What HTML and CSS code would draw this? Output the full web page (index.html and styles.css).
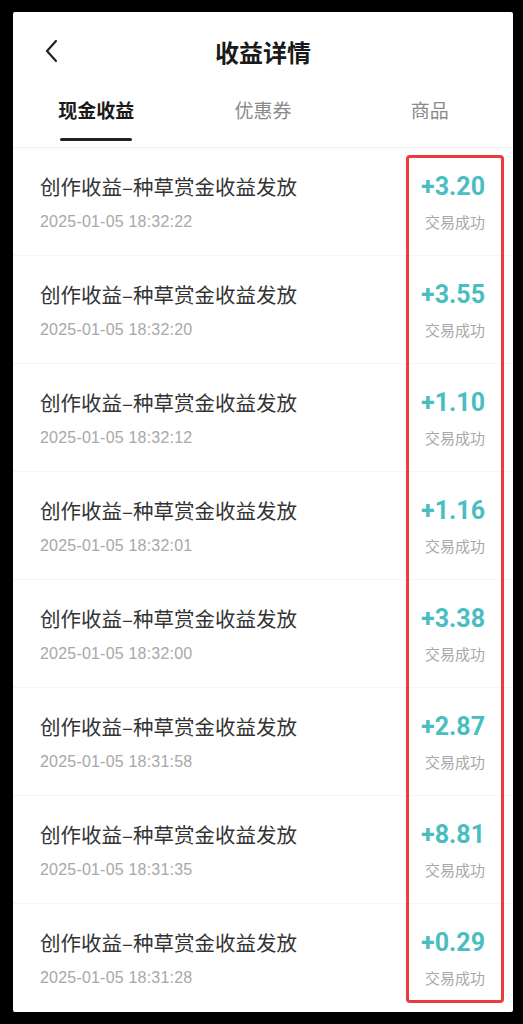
FILE: index.html
```html
<!DOCTYPE html>
<html lang="zh-CN">
<head>
<meta charset="utf-8">
<title>收益详情</title>
<link rel="stylesheet" href="styles.css">
</head>
<body>
<div class="screen">
  <header class="navbar">
    <svg class="back" width="14" height="24" viewBox="0 0 14 24"><path d="M12 2 L3 12 L12 22" fill="none" stroke="#222" stroke-width="2.2" stroke-linecap="round" stroke-linejoin="round"/></svg>
    <h1 class="title">收益详情</h1>
  </header>
  <nav class="tabs">
    <div class="tab active"><span>现金收益</span><i class="bar"></i></div>
    <div class="tab"><span>优惠券</span></div>
    <div class="tab"><span>商品</span></div>
  </nav>
  <ul class="list">
    <li class="row"><div class="info"><div class="name">创作收益–种草赏金收益发放</div><div class="date">2025-01-05 18:32:22</div></div><div class="amt"><div class="num">+3.20</div><div class="status">交易成功</div></div></li>
    <li class="row"><div class="info"><div class="name">创作收益–种草赏金收益发放</div><div class="date">2025-01-05 18:32:20</div></div><div class="amt"><div class="num">+3.55</div><div class="status">交易成功</div></div></li>
    <li class="row"><div class="info"><div class="name">创作收益–种草赏金收益发放</div><div class="date">2025-01-05 18:32:12</div></div><div class="amt"><div class="num">+1.10</div><div class="status">交易成功</div></div></li>
    <li class="row"><div class="info"><div class="name">创作收益–种草赏金收益发放</div><div class="date">2025-01-05 18:32:01</div></div><div class="amt"><div class="num">+1.16</div><div class="status">交易成功</div></div></li>
    <li class="row"><div class="info"><div class="name">创作收益–种草赏金收益发放</div><div class="date">2025-01-05 18:32:00</div></div><div class="amt"><div class="num">+3.38</div><div class="status">交易成功</div></div></li>
    <li class="row"><div class="info"><div class="name">创作收益–种草赏金收益发放</div><div class="date">2025-01-05 18:31:58</div></div><div class="amt"><div class="num">+2.87</div><div class="status">交易成功</div></div></li>
    <li class="row"><div class="info"><div class="name">创作收益–种草赏金收益发放</div><div class="date">2025-01-05 18:31:35</div></div><div class="amt"><div class="num">+8.81</div><div class="status">交易成功</div></div></li>
    <li class="row last"><div class="info"><div class="name">创作收益–种草赏金收益发放</div><div class="date">2025-01-05 18:31:28</div></div><div class="amt"><div class="num">+0.29</div><div class="status">交易成功</div></div></li>
  </ul>
  <div class="highlight"></div>
</div>
</body>
</html>
```
FILE: styles.css
```css
* { box-sizing: border-box; }
html, body { margin: 0; padding: 0; background: #000; }
body {
  width: 523px;
  height: 1024px;
  padding: 12px 10px 12px 13px;
  font-family: "Noto Sans CJK SC", "Noto Sans", sans-serif;
}
.screen {
  position: relative;
  width: 500px;
  height: 1000px;
  background: #fff;
  border-radius: 2px;
  overflow: hidden;
}
.navbar {
  height: 80px;
  display: flex;
  align-items: center;
  justify-content: center;
  position: relative;
}
.back {
  position: absolute;
  left: 31px;
  top: 27px;
}
.title {
  margin: 0;
  font-size: 24px;
  font-weight: 700;
  color: #1a1a1a;
  line-height: 30px;
}
.tabs {
  height: 56px;
  display: grid;
  grid-template-columns: 1fr 1fr 1fr;
  border-bottom: 1px solid #f0f0f0;
  box-shadow: 0 2px 4px rgba(0,0,0,0.025);
}
.tab {
  display: flex;
  flex-direction: column;
  align-items: center;
  padding-top: 6px;
  font-size: 19px;
  line-height: 24px;
  color: #8a8a8a;
}
.tab.active { color: #1a1a1a; font-weight: 700; }
.bar {
  display: block;
  width: 72px;
  height: 3px;
  margin-top: 16px;
  border-radius: 2px;
  background: #222;
}
.list { list-style: none; margin: 0; padding: 0; }
.row {
  height: 108px;
  padding: 26px 28px 0 27px;
  display: flex;
  justify-content: space-between;
  border-bottom: 1px solid #f5f5f5;
}
.row.last { border-bottom: none; }
.name {
  font-size: 20.5px;
  line-height: 24px;
  color: #333;
}
.date {
  margin-top: 14px;
  font-family: "Liberation Sans", "Noto Sans", sans-serif;
  font-size: 16px;
  letter-spacing: 0.2px;
  line-height: 20px;
  color: #a8a8a8;
}
.amt {
  display: flex;
  flex-direction: column;
  align-items: flex-end;
}
.num {
  font-family: "Roboto", "Noto Sans", sans-serif;
  font-weight: 700;
  font-size: 25px;
  line-height: 26px;
  color: #49bdbf;
}
.status {
  margin-top: 12px;
  font-size: 15px;
  line-height: 20px;
  color: #a8a8a8;
}
.highlight {
  position: absolute;
  left: 393px;
  top: 143px;
  width: 98px;
  height: 848px;
  border: 3.5px solid #ec3a3f;
  border-radius: 4px;
}
```
